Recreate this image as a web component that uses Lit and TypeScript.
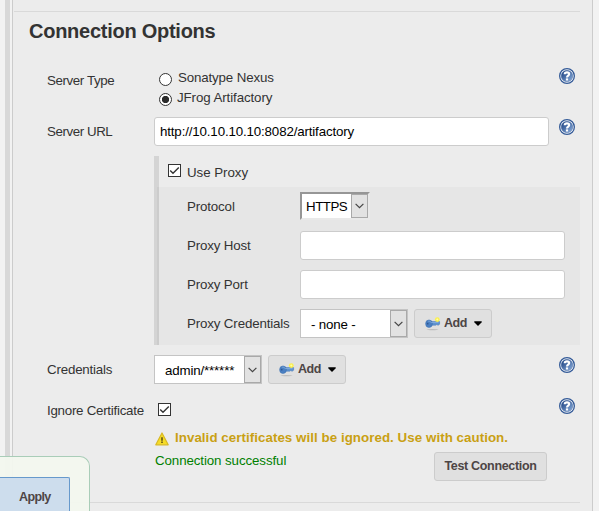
import { LitElement, html, css } from "lit";
import { customElement, property } from "lit/decorators.js";

@customElement("help-icon")
class HelpIcon extends LitElement {
  static styles = css`
    :host { display: block; width: 16px; height: 16px; }
    svg { display: block; }
  `;
  render() {
    return html`<svg width="16" height="16" viewBox="0 0 16 16">
      <defs><linearGradient id="g" x1="0" y1="0" x2="1" y2="1">
        <stop offset="0.1" stop-color="#1f4483" /><stop offset="0.9" stop-color="#83a6d6" />
      </linearGradient></defs>
      <circle cx="8" cy="8" r="7.35" fill="#fff" stroke="#335a98" stroke-width="1.3" />
      <circle cx="8" cy="8" r="5.8" fill="url(#g)" stroke="#3a6099" stroke-width="0.4" />
      <path d="M5.7 6.2C5.8 3.7 10.2 3.8 10.2 6.1C10.2 7.6 8 7.6 8 9.5" fill="none" stroke="#fff" stroke-width="2.1" />
      <rect x="6.9" y="10.4" width="2.2" height="2.1" fill="#fff" />
    </svg>`;
  }
}

@customElement("add-button")
class AddButton extends LitElement {
  static styles = css`
    :host {
      display: flex; align-items: center; box-sizing: border-box;
      width: 78px; height: 29px; padding-left: 10px;
      border: 1px solid #ccc; border-radius: 3px; background: #e0e0e0;
      color: #4d4545; font-weight: bold; font-size: 12.5px; letter-spacing: -0.5px;
    }
    .key { display: block; margin-top: 1px; }
    .text { margin: -2px 0 0 3px; width: 30px; }
    .caret { display: block; margin-top: -1px; }
  `;
  render() {
    return html`
      <svg class="key" width="16" height="16" viewBox="0 0 16 16">
        <ellipse cx="7.5" cy="13.6" rx="6" ry="0.6" fill="#000" opacity="0.16" />
        <path d="M6 5.6H14.6V8.2L13.6 9.1H12.6L11.8 8.5L10.8 9.2H6Z" fill="#5f93cf" stroke="#4274b4" stroke-width="0.5" />
        <ellipse cx="4" cy="7.7" rx="3.4" ry="3.8" fill="#4a7fc2" stroke="#3d70b0" stroke-width="0.5" />
        <circle cx="2.7" cy="7.7" r="0.9" fill="#2f5891" />
        <path d="M3.2 5.2Q5 4.8 6.2 6.5H13.5" fill="none" stroke="#86aede" stroke-width="0.8" />
        <circle cx="12.3" cy="3.6" r="2.4" fill="#fbf04c" />
        <circle cx="12.3" cy="3.6" r="1" fill="#fffca8" />
      </svg>
      <span class="text">Add</span>
      <svg class="caret" width="8" height="5" viewBox="0 0 8 5"><path d="M0 1Q0 0.3 1 0.3H7Q8 0.3 8 1L4 5Z" fill="#000" /></svg>
    `;
  }
}

@customElement("check-box")
class CheckBox extends LitElement {
  static styles = css`
    :host { display: block; flex: none; box-sizing: border-box; width: 13px; height: 13px; border: 1px solid #333; background: #fff; }
    svg { display: block; }
  `;
  render() {
    return html`<svg width="11" height="11" viewBox="0 0 11 11"><path d="M1.2 5.5L4 8.3L9.8 2.5" fill="none" stroke="#333" stroke-width="1.4" /></svg>`;
  }
}

@customElement("select-box")
class SelectBox extends LitElement {
  @property() value = "";
  static styles = css`
    :host {
      display: flex; box-sizing: border-box; background: #fff;
      border: 1px solid #c4c4c4; color: #000; font-size: 13.33px; letter-spacing: -0.16px;
    }
    .value { flex: 1; align-self: center; white-space: pre; padding-left: var(--inset, 10px); padding-top: var(--drop, 2px); }
    .arrow {
      display: flex; align-items: center; justify-content: center; box-sizing: border-box;
      width: 17px; border: 1px solid #a9a9a9; background: #e2e2e2;
    }
  `;
  render() {
    return html`<span class="value">${this.value}</span>
      <span class="arrow"><svg width="9" height="6" viewBox="0 0 9 6"><path d="M0.6 0.8L4.5 4.7L8.4 0.8" fill="none" stroke="#444" stroke-width="1.2" /></svg></span>`;
  }
}

@customElement("app-root")
class AppRoot extends LitElement {
  static styles = css`
    :host {
      display: flex; position: relative; box-sizing: border-box; width: 599px; height: 511px; overflow: hidden;
      background: #f2f2f2; color: #333; font: 13.33px/16px "Liberation Sans", Arial, sans-serif;
      padding-left: 5px; letter-spacing: -0.15px;
    }
    .rail { flex: none; width: 5px; background: #d8d8d8; margin-right: 2px; }
    .panel {
      flex: none; box-sizing: border-box; width: 581px; height: 511px; padding-left: 1px;
      background: #ececec; border: solid #ccc; border-width: 0 1px;
    }
    .rule { height: 1px; width: 566px; background: #d9d9d9; }
    .rule.first { margin-top: 11px; }
    h2 { margin: 0; padding: 7px 0 0 15px; height: 49px; box-sizing: border-box; font-size: 20px; line-height: 24px; letter-spacing: -0.26px; color: #333; }
    .row { display: grid; grid-template-columns: 107px 405px 16px; margin-left: 33px; align-items: start; }
    .lab { white-space: nowrap; }
    .type { height: 56px; }
    .type .lab { padding-top: 12px; letter-spacing: -0.4px; }
    .type help-icon { margin-top: 7px; }
    .options { padding: 8px 0 0 5px; }
    .option { display: flex; height: 20px; }
    .option .name { margin: 1px 0 0 6px; }
    .option .name.second { margin-left: 5px; letter-spacing: -0.1px; }
    .radio { margin-top: 4px; box-sizing: border-box; width: 13px; height: 13px; border: 1px solid #333; border-radius: 50%; background: #fff; }
    .radio.on { background: radial-gradient(circle, #2b2b2b 3.3px, #fff 4px); }
    .field { box-sizing: border-box; height: 29px; border: 1px solid #ccc; border-radius: 3px; background: #fff; color: #000; padding: 6px 0 0 5px; }
    .url { height: 39px; }
    .url .field { width: 395px; }
    .url .lab { padding-top: 7px; letter-spacing: -0.43px; }
    .url help-icon { margin-top: 2px; }
    .proxy { box-sizing: border-box; margin-left: 140px; width: 426px; height: 189px; border-left: 5px solid #d4d4d4; }
    .use { display: flex; height: 31px; padding: 8px 0 0 9px; box-sizing: border-box; }
    .use .name { margin-left: 6px; margin-top: 1px; letter-spacing: -0.05px; }
    .inner { height: 158px; margin-left: -2px; border-left: 2px solid #cccccc; background: #e6e6e6; box-sizing: border-box; padding: 5px 0 0 28px; }
    .line { display: grid; grid-template-columns: 113px 1fr; height: 39px; }
    .line .lab { padding-top: 7px; }
    .line .field { width: 265px; }
    .protocol {
      --inset: 4px; --drop: 1px; width: 70px; height: 28px; letter-spacing: -0.5px;
      border: 2px solid; border-color: #969696 #e9e9e9 #e9e9e9 #969696;
    }
    .pair { display: flex; gap: 6px; }
    .cred { width: 108px; height: 29px; }
    .creds { height: 41px; margin-top: 10px; }
    .creds .lab { padding-top: 7px; letter-spacing: -0.19px; }
    .creds help-icon { margin-top: 2px; }
    .ignore { height: 34px; }
    .ignore .lab { padding-top: 7px; letter-spacing: -0.26px; }
    .ignore check-box { margin: 7px 0 0 4px; }
    .ignore help-icon { margin-top: 2px; }
    .warning { display: flex; align-items: center; height: 17px; margin-left: 141px; color: #c9a013; font-weight: bold; white-space: nowrap; letter-spacing: 0.05px; }
    .warning svg { margin: 0 6px 0 0; }
    .warning span { margin-top: -2px; }
    .result { display: flex; margin-left: 141px; height: 55px; color: #008000; }
    .result .ok { width: 279px; padding-top: 6px; letter-spacing: -0.1px; }
    .test { box-sizing: border-box; width: 113px; height: 29px; margin-top: 5px; text-align: center; line-height: 26px; border: 1px solid #ccc; border-radius: 3px; background: #e0e0e0; color: #4d4545; font-weight: bold; font-size: 12.5px; letter-spacing: -0.32px; }
    .sticky {
      position: absolute; left: -10px; bottom: 0; width: 100px; height: 55px; box-sizing: border-box;
      border: 1px solid #a9cdb8; border-width: 1px 1px 0 0; border-radius: 0 10px 0 0; background: rgba(243, 248, 239, 0.93); padding-top: 20px;
    }
    .apply { box-sizing: border-box; width: 80px; height: 36px; border: 1px solid #6699cc; border-bottom: 0; border-radius: 0 2px 0 0; background: #cddded; color: #4d4545; font-weight: bold; font-size: 12.5px; letter-spacing: -0.6px; line-height: 16px; padding: 11px 0 0 28px; }
  `;

  render() {
    return html`
      <div class="rail"></div>
      <div class="panel">
        <div class="rule first"></div>
        <h2>Connection Options</h2>
        <div class="row type">
          <span class="lab">Server Type</span>
          <div class="options">
            <div class="option"><span class="radio"></span><span class="name">Sonatype Nexus</span></div>
            <div class="option"><span class="radio on"></span><span class="name second">JFrog Artifactory</span></div>
          </div>
          <help-icon></help-icon>
        </div>
        <div class="row url">
          <span class="lab">Server URL</span>
          <div class="field">http://10.10.10.10:8082/artifactory</div>
          <help-icon></help-icon>
        </div>
        <div class="proxy">
          <div class="use"><check-box></check-box><span class="name">Use Proxy</span></div>
          <div class="inner">
            <div class="line"><span class="lab">Protocol</span><select-box class="protocol" value="HTTPS"></select-box></div>
            <div class="line"><span class="lab">Proxy Host</span><div class="field"></div></div>
            <div class="line"><span class="lab">Proxy Port</span><div class="field"></div></div>
            <div class="line"><span class="lab">Proxy Credentials</span>
              <div class="pair"><select-box class="cred" value="- none -"></select-box><add-button></add-button></div>
            </div>
          </div>
        </div>
        <div class="row creds">
          <span class="lab">Credentials</span>
          <div class="pair"><select-box class="cred" value="admin/******"></select-box><add-button></add-button></div>
          <help-icon></help-icon>
        </div>
        <div class="row ignore">
          <span class="lab">Ignore Certificate</span>
          <check-box></check-box>
          <help-icon></help-icon>
        </div>
        <div class="warning">
          <svg width="14" height="14" viewBox="0 0 14 14">
            <path d="M7 1L13.2 12.8H0.8Z" fill="#f6dc27" stroke="#d8b924" stroke-width="1.2" stroke-linejoin="round" />
            <path d="M7 5.2V8.8M7 9.6V11" stroke="#5f5216" stroke-width="1.6" />
          </svg>
          <span>Invalid certificates will be ignored. Use with caution.</span>
        </div>
        <div class="result"><span class="ok">Connection successful</span><div class="test">Test Connection</div></div>
        <div class="rule"></div>
      </div>
      <div class="sticky"><div class="apply">Apply</div></div>
    `;
  }
}
